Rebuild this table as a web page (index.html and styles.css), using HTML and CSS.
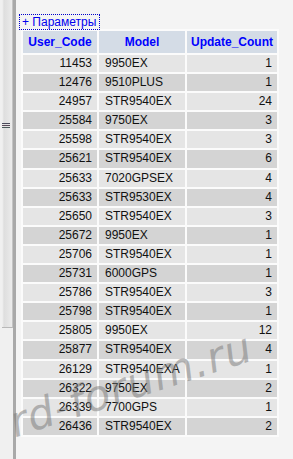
FILE: index.html
```html
<!DOCTYPE html>
<html lang="ru">
<head>
<meta charset="utf-8">
<title>Параметры</title>
<link rel="stylesheet" href="styles.css">
</head>
<body>
<div class="frame">
  <aside class="splitter">
    <div class="splitter-track">
      <div class="splitter-thumb">
        <svg class="grip" width="8" height="6" viewBox="0 0 8 6">
          <rect x="0" y="0" width="8" height="1" fill="#4a4a5a"/>
          <rect x="0" y="2" width="8" height="1" fill="#5a4a5a"/>
          <rect x="0" y="4" width="8" height="1" fill="#4a5a5a"/>
        </svg>
      </div>
    </div>
    <div class="splitter-line"></div>
  </aside>
  <main class="content">
    <a class="params-link" href="#">+ Параметры</a>
    <table class="grid">
      <colgroup><col class="c1"><col class="c2"><col class="c3"></colgroup>
      <thead>
        <tr><th>User_Code</th><th>Model</th><th>Update_Count</th></tr>
      </thead>
      <tbody>
        <tr><td class="num">11453</td><td>9950EX</td><td class="num">1</td></tr>
        <tr><td class="num">12476</td><td>9510PLUS</td><td class="num">1</td></tr>
        <tr><td class="num">24957</td><td>STR9540EX</td><td class="num">24</td></tr>
        <tr><td class="num">25584</td><td>9750EX</td><td class="num">3</td></tr>
        <tr><td class="num">25598</td><td>STR9540EX</td><td class="num">3</td></tr>
        <tr><td class="num">25621</td><td>STR9540EX</td><td class="num">6</td></tr>
        <tr><td class="num">25633</td><td>7020GPSEX</td><td class="num">4</td></tr>
        <tr><td class="num">25633</td><td>STR9530EX</td><td class="num">4</td></tr>
        <tr><td class="num">25650</td><td>STR9540EX</td><td class="num">3</td></tr>
        <tr><td class="num">25672</td><td>9950EX</td><td class="num">1</td></tr>
        <tr><td class="num">25706</td><td>STR9540EX</td><td class="num">1</td></tr>
        <tr><td class="num">25731</td><td>6000GPS</td><td class="num">1</td></tr>
        <tr><td class="num">25786</td><td>STR9540EX</td><td class="num">3</td></tr>
        <tr><td class="num">25798</td><td>STR9540EX</td><td class="num">1</td></tr>
        <tr><td class="num">25805</td><td>9950EX</td><td class="num">12</td></tr>
        <tr><td class="num">25877</td><td>STR9540EX</td><td class="num">4</td></tr>
        <tr><td class="num">26129</td><td>STR9540EXA</td><td class="num">1</td></tr>
        <tr><td class="num">26322</td><td>9750EX</td><td class="num">2</td></tr>
        <tr><td class="num">26339</td><td>7700GPS</td><td class="num">1</td></tr>
        <tr><td class="num">26436</td><td>STR9540EX</td><td class="num">2</td></tr>
      </tbody>
    </table>
  </main>
  <div class="watermark">rd-forum.ru</div>
</div>
</body>
</html>
```

FILE: styles.css
```css
html, body {
  margin: 0;
  padding: 0;
  background: #f4f4f4;
}

.frame {
  position: relative;
  display: flex;
  width: 293px;
  height: 459px;
  overflow: hidden;
  font-family: "Liberation Sans", Arial, sans-serif;
  font-size: 12px;
}

/* left frame splitter */
.splitter {
  display: flex;
  width: 18px;
  flex: none;
  background: #f4f4f4;
}

.splitter-track {
  width: 13px;
  background: #f0f0f0;
}

.splitter-thumb {
  box-sizing: border-box;
  height: 328px;
  margin-left: 2px;
  width: 11px;
  border-right: 1px solid #c4c4c4;
  border-bottom: 1px solid #b8b8b8;
  background: linear-gradient(to right, #f2f2f2 0, #dedede 20%, #e4e4e4 60%, #ececec 100%);
  display: flex;
  flex-direction: column;
  align-items: flex-start;
  padding-top: 123px;
}

.grip {
  display: block;
}

.splitter-line {
  width: 3px;
  background: #a9a9a9;
}

/* main content */
.content {
  flex: 1;
  padding: 15px 0 0 1px;
}

.params-link {
  display: inline-block;
  color: #0000ee;
  text-decoration: none;
  line-height: 14px;
  padding: 0 3px 0 2px;
  outline: 1px dotted #0000cc;
  margin-left: 1px;
}

.grid {
  border-collapse: separate;
  border-spacing: 2px;
  background: #fbfbfb;
  margin-left: 2px;
  width: 258px;
  table-layout: fixed;
}

.grid .c1 { width: 74px; }
.grid .c2 { width: 86px; }
.grid .c3 { width: 90px; }

.grid th,
.grid td {
  box-sizing: border-box;
}

.grid th {
  background: #d4dce6;
  color: #0000ff;
  font-weight: bold;
  height: 22px;
  padding: 0;
  text-align: center;
  line-height: 20px;
  white-space: nowrap;
}

.grid td {
  padding: 1px 5px 1px 6px;
  line-height: 15.1px;
  color: #111;
  white-space: nowrap;
}

.grid td.num {
  text-align: right;
}

.grid tbody tr:nth-child(odd) td { background: #e5e5e5; }
.grid tbody tr:nth-child(even) td { background: #d4d4d4; }

/* site stamp across the table */
.watermark {
  position: absolute;
  left: 18px;
  top: 398px;
  font-family: "DejaVu Sans", sans-serif;
  font-weight: 200;
  font-style: italic;
  font-size: 42px;
  letter-spacing: 1px;
  color: rgba(120, 120, 120, 0.5);
  transform: rotate(-18deg);
  transform-origin: left bottom;
  pointer-events: none;
  white-space: nowrap;
}
```
